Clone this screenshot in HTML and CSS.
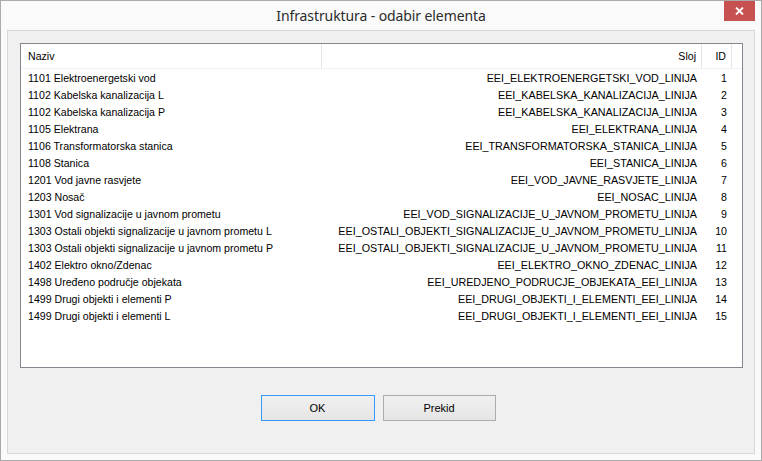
FILE: index.html
```html
<!DOCTYPE html>
<html>
<head>
<meta charset="utf-8">
<link rel="stylesheet" href="styles.css">
</head>
<body>
<div class="window">
  <div class="titlebar">
    <div class="title">Infrastruktura - odabir elementa</div>
    <div class="close"><svg width="9" height="8" viewBox="0 0 9 8"><path d="M1 0.5 L8 7.5 M8 0.5 L1 7.5" stroke="#fff" stroke-width="1.8"/></svg></div>
  </div>
  <div class="client">
    <div class="list">
      <div class="row header">
        <div class="c name">Naziv</div>
        <div class="c layer">Sloj</div>
        <div class="c id">ID</div>
        <div class="c fill"></div>
      </div>
      <div class="row"><div class="c name">1101 Elektroenergetski vod</div><div class="c layer">EEI_ELEKTROENERGETSKI_VOD_LINIJA</div><div class="c id">1</div></div>
      <div class="row"><div class="c name">1102 Kabelska kanalizacija L</div><div class="c layer">EEI_KABELSKA_KANALIZACIJA_LINIJA</div><div class="c id">2</div></div>
      <div class="row"><div class="c name">1102 Kabelska kanalizacija P</div><div class="c layer">EEI_KABELSKA_KANALIZACIJA_LINIJA</div><div class="c id">3</div></div>
      <div class="row"><div class="c name">1105 Elektrana</div><div class="c layer">EEI_ELEKTRANA_LINIJA</div><div class="c id">4</div></div>
      <div class="row"><div class="c name">1106 Transformatorska stanica</div><div class="c layer">EEI_TRANSFORMATORSKA_STANICA_LINIJA</div><div class="c id">5</div></div>
      <div class="row"><div class="c name">1108 Stanica</div><div class="c layer">EEI_STANICA_LINIJA</div><div class="c id">6</div></div>
      <div class="row"><div class="c name">1201 Vod javne rasvjete</div><div class="c layer">EEI_VOD_JAVNE_RASVJETE_LINIJA</div><div class="c id">7</div></div>
      <div class="row"><div class="c name">1203 Nosač</div><div class="c layer">EEI_NOSAC_LINIJA</div><div class="c id">8</div></div>
      <div class="row"><div class="c name">1301 Vod signalizacije u javnom prometu</div><div class="c layer">EEI_VOD_SIGNALIZACIJE_U_JAVNOM_PROMETU_LINIJA</div><div class="c id">9</div></div>
      <div class="row"><div class="c name">1303 Ostali objekti signalizacije u javnom prometu L</div><div class="c layer">EEI_OSTALI_OBJEKTI_SIGNALIZACIJE_U_JAVNOM_PROMETU_LINIJA</div><div class="c id">10</div></div>
      <div class="row"><div class="c name">1303 Ostali objekti signalizacije u javnom prometu P</div><div class="c layer">EEI_OSTALI_OBJEKTI_SIGNALIZACIJE_U_JAVNOM_PROMETU_LINIJA</div><div class="c id">11</div></div>
      <div class="row"><div class="c name">1402 Elektro okno/Zdenac</div><div class="c layer">EEI_ELEKTRO_OKNO_ZDENAC_LINIJA</div><div class="c id">12</div></div>
      <div class="row"><div class="c name">1498 Uređeno područje objekata</div><div class="c layer">EEI_UREDJENO_PODRUCJE_OBJEKATA_EEI_LINIJA</div><div class="c id">13</div></div>
      <div class="row"><div class="c name">1499 Drugi objekti i elementi P</div><div class="c layer">EEI_DRUGI_OBJEKTI_I_ELEMENTI_EEI_LINIJA</div><div class="c id">14</div></div>
      <div class="row"><div class="c name">1499 Drugi objekti i elementi L</div><div class="c layer">EEI_DRUGI_OBJEKTI_I_ELEMENTI_EEI_LINIJA</div><div class="c id">15</div></div>
    </div>
    <div class="buttons">
      <button class="btn default">OK</button>
      <button class="btn">Prekid</button>
    </div>
  </div>
</div>
</body>
</html>
```
FILE: styles.css
```css
* { box-sizing: border-box; }
html, body { margin: 0; padding: 0; background: #fff; }
body { font-family: "Liberation Sans", Arial, sans-serif; font-size: 10.6px; color: #000; }

.window {
  width: 762px;
  height: 461px;
  border: 1px solid #aaaaaa;
  background: #fafafa;
  padding: 0 6px 6px 6px;
  display: flex;
  flex-direction: column;
}

.titlebar {
  height: 29px;
  display: flex;
  align-items: flex-start;
  justify-content: center;
  position: relative;
}
.title {
  font-family: "Noto Sans", "Open Sans", sans-serif;
  font-size: 14px;
  color: #2b2b2b;
  margin-top: 5px;
  letter-spacing: -0.1px;
}
.close {
  position: absolute;
  right: 0;
  top: 0;
  width: 31px;
  height: 20px;
  background: #c75050;
  display: flex;
  align-items: center;
  justify-content: center;
}

.client {
  flex: 1;
  border: 1px solid #d9d9d9;
  background: #f0f0f0;
  padding: 12px 11px 0 12px;
  display: flex;
  flex-direction: column;
}

.list {
  height: 325px;
  border: 1px solid #828790;
  background: #fff;
}

.row {
  display: grid;
  grid-template-columns: 301px 380px 30px 1fr;
  height: 17px;
  line-height: 18px;
}
.row.header {
  height: 25px;
  line-height: 24px;
  border-bottom: 1px solid #eef2f8;
}
.row.header .c { border-right: 1px solid #e5e5e5; }
.row.header .fill { border-right: none; }

.c { white-space: nowrap; overflow: hidden; }
.name { padding-left: 7px; }
.layer { text-align: right; padding-right: 5px; font-size: 10.75px; }
.row.header .layer { font-size: 10.6px; }
.id { text-align: right; padding-right: 5px; }

.buttons {
  display: flex;
  justify-content: center;
  gap: 8px;
  margin-top: 27px;
  padding-right: 7px;
}
.btn {
  width: 113px;
  height: 26px;
  font-family: "Liberation Sans", Arial, sans-serif;
  font-size: 11px;
  color: #000;
  background: linear-gradient(#f0f0f0, #e5e5e5);
  border: 1px solid #acacac;
  padding: 0;
}
.btn.default { border-color: #3399ff; width: 114px; }
```
